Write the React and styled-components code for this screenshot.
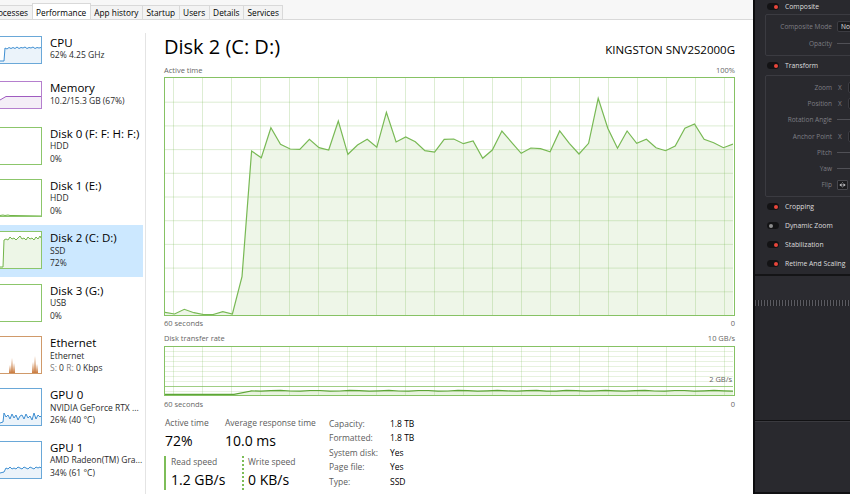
import React from "react";
import styled, { createGlobalStyle } from "styled-components";

const GlobalStyle = createGlobalStyle`
  html, body {
    margin: 0;
    padding: 0;
    background: #ffffff;
  }
  body {
    font-family: "Open Sans", "Noto Sans", sans-serif;
  }
  * {
    box-sizing: border-box;
  }
`;

const PALETTE = {
  cpu: { border: "#6aa8d8", line: "#3f8fd2", fill: "#ebf3fa" },
  mem: { border: "#b57fce", line: "#a05cc0", fill: "#f4eef7" },
  disk: { border: "#8cc66b", line: "#72b44a", fill: "#edf6e7" },
  net: { border: "#d09a6a", line: "#c0631c", fill: "#fbeee2" },
};

// active time samples, px from the top of the chart frame
const ACTIVE = [
  312.3, 314, 309.3, 312.7, 316, 315.3, 311.7, 314, 276.7, 151, 157.7, 127.7,
  144.3, 149, 149.3, 139.3, 147.7, 150, 121, 154.3, 145, 139.3, 147.3, 112.3,
  142, 137, 141.7, 150.7, 152, 139.3, 139, 143.7, 141, 158.3, 150, 131, 142.3,
  153.3, 148, 148.7, 151.7, 131, 143.3, 154, 143.3, 98.3, 128.3, 148.3, 131,
  143.3, 139.3, 147.7, 150.7, 146, 128.3, 124, 139.3, 142.7, 147.7, 144,
];

const Screen = styled.div`
  display: flex;
  width: 850px;
  height: 494px;
  overflow: hidden;
`;

const Window = styled.div`
  width: 753px;
  flex-shrink: 0;
  display: flex;
  flex-direction: column;
  background: #fff;
  color: #000;
`;

const TabBar = styled.div`
  height: 20px;
  flex-shrink: 0;
  display: flex;
  align-items: flex-end;
  background: #f7f7f7;
  border-bottom: 1px solid #d9d9d9;
  overflow: hidden;
`;

const Tab = styled.div`
  height: ${(p) => (p.$active ? 17 : 14)}px;
  margin-bottom: ${(p) => (p.$active ? -1 : 0)}px;
  margin-left: -1px;
  padding: 0 3.5px;
  display: flex;
  align-items: center;
  border: 1px solid #d9d9d9;
  border-bottom: none;
  background: ${(p) => (p.$active ? "#fff" : "#f3f3f3")};
  font-size: 8.3px;
  white-space: nowrap;
  &:first-child {
    margin-left: -15px;
  }
`;

const Body = styled.div`
  flex: 1;
  display: flex;
  min-height: 0;
`;

const Sidebar = styled.div`
  width: 143px;
  flex-shrink: 0;
  padding-top: 9px;
  display: flex;
  flex-direction: column;
`;

const SideDivider = styled.div`
  width: 1px;
  flex-shrink: 0;
  margin: 13px 0 0 2px;
  background: #e4e4e4;
`;

const SideItem = styled.div`
  height: ${(p) => p.$h}px;
  flex-shrink: 0;
  display: flex;
  align-items: flex-start;
  padding-top: 6.5px;
  background: ${(p) => (p.$selected ? "#cce8ff" : "transparent")};
`;

const Thumb = styled.div`
  width: 42px;
  height: ${(p) => p.$h}px;
  flex-shrink: 0;
  border: 1px solid ${(p) => p.$color};
  border-left: none;
  background: #fff;
  svg {
    display: block;
  }
`;

const ItemText = styled.div`
  margin-left: 8px;
  display: flex;
  flex-direction: column;
  white-space: nowrap;
`;

const ItemTitle = styled.div`
  font-size: 11.5px;
  line-height: 13px;
  margin-bottom: 0.5px;
`;

const ItemSub = styled.div`
  font-size: 8.5px;
  line-height: 12.5px;
  color: #2a2a2a;
`;

const Dim = styled.span`
  color: #808080;
`;

const Main = styled.div`
  flex: 1;
  min-width: 0;
  padding: 13px 18px 0;
  display: flex;
  flex-direction: column;
`;

const Header = styled.div`
  height: 28px;
  display: flex;
  justify-content: space-between;
  align-items: baseline;
`;

const Title = styled.div`
  font-size: 20px;
  line-height: 28px;
`;

const Model = styled.div`
  font-size: 11.5px;
  line-height: 28px;
`;

const AxisRow = styled.div`
  display: flex;
  justify-content: space-between;
  margin-top: ${(p) => p.$mt}px;
  font-size: 7.5px;
  line-height: 10px;
  color: #666;
`;

const ChartFrame = styled.div`
  position: relative;
  height: ${(p) => p.$h}px;
  margin-top: ${(p) => p.$mt}px;
  border: 1px solid #86c264;
  background: #fff;
  svg {
    display: block;
  }
`;

const ScaleTag = styled.span`
  position: absolute;
  right: 2px;
  top: 27px;
  font-size: 7.5px;
  line-height: 10px;
  color: #666;
`;

const Stats = styled.div`
  display: flex;
  margin-top: 8px;
`;

const StatsLeft = styled.div`
  width: 165px;
  flex-shrink: 0;
  display: flex;
  flex-direction: column;
`;

const StatRow = styled.div`
  display: flex;
  margin-top: ${(p) => p.$mt || 0}px;
`;

const StatCell = styled.div`
  width: ${(p) => (p.$w ? `${p.$w}px` : "auto")};
  display: flex;
  flex-direction: column;
  padding-left: 1px;
`;

const SpeedCell = styled(StatCell)`
  border-left: 2px ${(p) => (p.$dotted ? "dotted" : "solid")} #7dbd58;
  padding-left: ${(p) => p.$pad}px;
`;

const StatLabel = styled.div`
  font-size: 8.5px;
  line-height: 12px;
  color: #5c5c5c;
  white-space: nowrap;
`;

const StatValue = styled.div`
  font-size: 14px;
  line-height: 20px;
  margin-top: 2px;
  white-space: nowrap;
`;

const PropGrid = styled.div`
  display: grid;
  grid-template-columns: 61px auto;
  grid-auto-rows: 14.5px;
  align-items: center;
  margin-top: -1px;
  font-size: 8.5px;
`;

const PropKey = styled.div`
  color: #5c5c5c;
`;

const PropVal = styled.div`
  color: #000;
`;

const Inspector = styled.div`
  flex: 1;
  min-width: 0;
  display: flex;
  flex-direction: column;
  background: #29292e;
  border-left: 2px solid #0c0c0e;
  overflow: hidden;
`;

const SectionHead = styled.div`
  height: ${(p) => p.$h}px;
  margin-top: ${(p) => p.$mt || 0}px;
  flex-shrink: 0;
  display: flex;
  align-items: center;
  padding-left: 12px;
`;

const Toggle = styled.div`
  width: 12px;
  height: 7px;
  border-radius: 4px;
  background: #131315;
  display: flex;
  align-items: center;
  justify-content: ${(p) => (p.$on ? "flex-end" : "flex-start")};
  padding: 0 1.5px;
`;

const ToggleDot = styled.div`
  width: 4px;
  height: 4px;
  border-radius: 50%;
  background: ${(p) => (p.$on ? "#e8463b" : "#8d8d8d")};
`;

const SectionName = styled.div`
  margin-left: 6px;
  font-size: 6.8px;
  font-weight: 500;
  color: #dedede;
  white-space: nowrap;
`;

const PropBox = styled.div`
  width: 170px;
  flex-shrink: 0;
  margin: ${(p) => p.$mt}px 0 0 10px;
  padding: 3.5px 0 3px;
  border: 1px solid #3b3b41;
  border-radius: 2px;
`;

const PropRow = styled.div`
  height: ${(p) => p.$h}px;
  display: grid;
  grid-template-columns: 66px 1fr;
  column-gap: 5px;
  align-items: center;
`;

const PropName = styled.div`
  text-align: right;
  font-size: 6.5px;
  color: #7e7e84;
  white-space: nowrap;
`;

const Field = styled.div`
  width: 60px;
  height: 11px;
  padding-left: 3px;
  background: #1c1c1f;
  border: 1px solid #3c3c42;
  border-radius: 2px;
  color: #e0e0e0;
  font-size: 6.5px;
  line-height: 9px;
`;

const Slider = styled.div`
  height: 1px;
  background: #505056;
`;

const Axis = styled.div`
  display: flex;
  align-items: center;
`;

const AxisName = styled.span`
  width: 11px;
  padding-left: 1px;
  font-size: 6.5px;
  color: #7e7e84;
`;

const FlipGroup = styled.div`
  display: flex;
  gap: 3px;
`;

const FlipBtn = styled.div`
  width: 11px;
  height: 10px;
  background: #1c1c1f;
  border: 1px solid #48484e;
  border-radius: 1px;
  display: flex;
  align-items: center;
  justify-content: center;
`;

const PanelRule = styled.div`
  height: 2px;
  flex-shrink: 0;
  margin-top: 0.5px;
  background: #141416;
`;

const Toolbar = styled.div`
  height: 24px;
  flex-shrink: 0;
  background: #2b2b30;
`;

const Ruler = styled.div`
  height: 6px;
  flex-shrink: 0;
  background: repeating-linear-gradient(90deg, #5a5a60 0 1px, #232327 1px 3px);
`;

const Tracks = styled.div`
  height: 114px;
  flex-shrink: 0;
  background: #27272c;
`;

const Split = styled.div`
  height: 2px;
  flex-shrink: 0;
  border-top: 1px solid #111113;
  border-bottom: 1px solid #3a3a3f;
`;

const Lower = styled.div`
  flex: 1;
  background: #29292e;
  border-bottom: 2px solid #111113;
`;

const Spark = ({ w, h, pts, pal, spikes }) => (
  <svg width={w} height={h}>
    {pts && <polygon points={`${pts} ${w},${h} 0,${h}`} fill={pal.fill} />}
    {pts && <polyline points={pts} fill="none" stroke={pal.line} strokeWidth="1" />}
    {spikes && <polygon points={spikes} fill={pal.line} opacity="0.85" />}
  </svg>
);

const SIDE = [
  { name: "CPU", lines: ["62% 4.25 GHz"], pal: PALETTE.cpu, h: 45.5, th: 28,
    pts: "0,24 4,24 5,11 7,12 9,10.5 11,11.5 13,10.5 15,11.5 17,10 19,11.5 21,10.5 23,11 25,10 27,11.5 29,10.5 31,11 33,10 35,11.5 37,10.5 39,11 41,10.5" },
  { name: "Memory", lines: ["10.2/15.3 GB (67%)"], pal: PALETTE.mem, h: 45.5, th: 28,
    pts: "0,18 6,14.5 41,14.5" },
  { name: "Disk 0 (F: F: H: F:)", lines: ["HDD", "0%"], pal: PALETTE.disk, h: 52.4, th: 38 },
  { name: "Disk 1 (E:)", lines: ["HDD", "0%"], pal: PALETTE.disk, h: 52.4, th: 38,
    pts: "0,35.5 3,35 5,35.5 8,35 10,35.5 13,35.5 41,36" },
  { name: "Disk 2 (C: D:)", lines: ["SSD", "72%"], pal: PALETTE.disk, h: 52.4, th: 38, selected: true,
    pts: "0,35 3,35 4,8 6,7 8,8 10,5 12,7 14,6 16,8 18,6 20,4 22,7 24,6 26,8 28,5 30,7 32,6 34,8 36,5 38,7 40,4 41,6" },
  { name: "Disk 3 (G:)", lines: ["USB", "0%"], pal: PALETTE.disk, h: 52.4, th: 38 },
  { name: "Ethernet", lines: ["Ethernet", "net"], pal: PALETTE.net, h: 52.4, th: 38,
    spikes: "0,36 9,36 10,28 11,36 12,21 13,36 14,26 15,36 32,36 33,25 34,36 35,19 36,36 37,27 38,36 41,36" },
  { name: "GPU 0", lines: ["NVIDIA GeForce RTX ...", "26% (40 °C)"], pal: PALETTE.cpu, h: 52.4, th: 38,
    pts: "0,34 3,33 4,24 6,28 8,26 10,30 12,25 14,29 16,26 18,31 20,27 22,26 24,30 26,25 28,29 30,27 32,31 34,24 36,30 38,26 40,28 41,27" },
  { name: "GPU 1", lines: ["AMD Radeon(TM) Gra...", "34% (61 °C)"], pal: PALETTE.cpu, h: 52.4, th: 38,
    pts: "0,31 4,30 6,26 8,27 10,25 12,27 14,26 16,27 18,25 20,26 22,27 24,25 26,26 28,27 30,25 32,26 34,27 36,25 38,26 40,25 41,26" },
];

const TABS = ["Processes", "Performance", "App history", "Startup", "Users", "Details", "Services"];

const CW = 568;

const GridV = ({ h, color }) =>
  Array.from({ length: 20 }, (_, k) => (
    <line key={`v${k}`} x1={8.5 + 29 * k} x2={8.5 + 29 * k} y1={0} y2={h} stroke={color} strokeWidth="1" />
  ));

const ActiveChart = () => {
  const h = 237;
  const pts = ACTIVE.map((v, i) => `${((i * CW) / 59).toFixed(1)},${Math.min(v - 78, h - 0.5).toFixed(1)}`).join(" ");
  return (
    <svg width={CW} height={h}>
      <polygon points={`${pts} ${CW},${h} 0,${h}`} fill="#eef6e8" />
      <GridV h={h} color="rgba(120,185,80,0.25)" />
      {Array.from({ length: 9 }, (_, k) => (
        <line key={`h${k}`} x1={0} x2={CW} y1={23.7 * (k + 1) + 0.5} y2={23.7 * (k + 1) + 0.5} stroke="rgba(120,185,80,0.25)" />
      ))}
      <polyline points={pts} fill="none" stroke="#78b954" strokeWidth="1.2" />
    </svg>
  );
};

const TransferChart = () => {
  const h = 48;
  const tail = Array.from({ length: 50 }, (_, i) => {
    const x = 86 + i * 9.85;
    const y = 43.8 + Math.sin(i * 1.7) * 0.45;
    return `${Math.min(x, CW).toFixed(1)},${y.toFixed(1)}`;
  }).join(" ");
  const pts = `0,47.3 69,47.3 86,44 ${tail}`;
  return (
    <svg width={CW} height={h}>
      <polygon points={`${pts} ${CW},${h} 0,${h}`} fill="#e8f3df" />
      <GridV h={h} color="rgba(120,185,80,0.22)" />
      {Array.from({ length: 9 }, (_, k) => (
        <line
          key={`h${k}`}
          x1={0}
          x2={CW}
          y1={4.5 + 5 * k}
          y2={4.5 + 5 * k}
          stroke={k === 7 ? "rgba(120,185,80,0.7)" : "rgba(120,185,80,0.18)"}
        />
      ))}
      <polyline points={pts} fill="none" stroke="#5da537" strokeWidth="1.2" />
    </svg>
  );
};

const FlipIcon = ({ mirror }) => (
  <svg width="7" height="6" viewBox="0 0 7 6" style={mirror ? { transform: "rotate(90deg)" } : undefined}>
    <line x1="3.5" y1="0" x2="3.5" y2="6" stroke="#9a9aa0" strokeWidth="0.6" strokeDasharray="1 0.8" />
    <polygon points="0.3,3 2.6,1.2 2.6,4.8" fill="#c8c8cc" />
    <polygon points="6.7,3 4.4,1.2 4.4,4.8" fill="#c8c8cc" />
  </svg>
);

const Section = ({ name, on = true, h = 19, mt }) => (
  <SectionHead $h={h} $mt={mt}>
    <Toggle $on={on}>
      <ToggleDot $on={on} />
    </Toggle>
    <SectionName>{name}</SectionName>
  </SectionHead>
);

const AxisField = () => (
  <Axis>
    <AxisName>X</AxisName>
    <Field />
  </Axis>
);

const App = () => (
  <>
    <GlobalStyle />
    <Screen>
      <Window>
        <TabBar>
          {TABS.map((t) => (
            <Tab key={t} $active={t === "Performance"}>
              {t}
            </Tab>
          ))}
        </TabBar>
        <Body>
          <Sidebar>
            {SIDE.map((s) => (
              <SideItem key={s.name} $h={s.h} $selected={s.selected}>
                <Thumb $h={s.th} $color={s.pal.border}>
                  <Spark w={41} h={s.th - 2} pts={s.pts} pal={s.pal} spikes={s.spikes} />
                </Thumb>
                <ItemText>
                  <ItemTitle>{s.name}</ItemTitle>
                  {s.lines.map((l) =>
                    l === "net" ? (
                      <ItemSub key={l}>
                        <Dim>S:</Dim> 0 <Dim>R:</Dim> 0 Kbps
                      </ItemSub>
                    ) : (
                      <ItemSub key={l}>{l}</ItemSub>
                    )
                  )}
                </ItemText>
              </SideItem>
            ))}
          </Sidebar>
          <SideDivider />
          <Main>
            <Header>
              <Title>Disk 2 (C: D:)</Title>
              <Model>KINGSTON SNV2S2000G</Model>
            </Header>
            <AxisRow $mt={4}>
              <span>Active time</span>
              <span>100%</span>
            </AxisRow>
            <ChartFrame $h={239} $mt={2}>
              <ActiveChart />
            </ChartFrame>
            <AxisRow $mt={2}>
              <span>60 seconds</span>
              <span>0</span>
            </AxisRow>
            <AxisRow $mt={5}>
              <span>Disk transfer rate</span>
              <span>10 GB/s</span>
            </AxisRow>
            <ChartFrame $h={50} $mt={3}>
              <TransferChart />
              <ScaleTag>2 GB/s</ScaleTag>
            </ChartFrame>
            <AxisRow $mt={3}>
              <span>60 seconds</span>
              <span>0</span>
            </AxisRow>
            <Stats>
              <StatsLeft>
                <StatRow>
                  <StatCell $w={60}>
                    <StatLabel>Active time</StatLabel>
                    <StatValue>72%</StatValue>
                  </StatCell>
                  <StatCell>
                    <StatLabel>Average response time</StatLabel>
                    <StatValue>10.0 ms</StatValue>
                  </StatCell>
                </StatRow>
                <StatRow $mt={5}>
                  <SpeedCell $w={78} $pad={5}>
                    <StatLabel>Read speed</StatLabel>
                    <StatValue>1.2 GB/s</StatValue>
                  </SpeedCell>
                  <SpeedCell $dotted $pad={4}>
                    <StatLabel>Write speed</StatLabel>
                    <StatValue>0 KB/s</StatValue>
                  </SpeedCell>
                </StatRow>
              </StatsLeft>
              <PropGrid>
                <PropKey>Capacity:</PropKey>
                <PropVal>1.8 TB</PropVal>
                <PropKey>Formatted:</PropKey>
                <PropVal>1.8 TB</PropVal>
                <PropKey>System disk:</PropKey>
                <PropVal>Yes</PropVal>
                <PropKey>Page file:</PropKey>
                <PropVal>Yes</PropVal>
                <PropKey>Type:</PropKey>
                <PropVal>SSD</PropVal>
              </PropGrid>
            </Stats>
          </Main>
        </Body>
      </Window>
      <Inspector>
        <Section name="Composite" h={13} />
        <PropBox $mt={1}>
          <PropRow $h={16.5}>
            <PropName>Composite Mode</PropName>
            <Field>Normal</Field>
          </PropRow>
          <PropRow $h={16.5}>
            <PropName>Opacity</PropName>
            <Slider />
          </PropRow>
        </PropBox>
        <Section name="Transform" h={13} mt={3.5} />
        <PropBox $mt={2.5}>
          <PropRow $h={16.3}>
            <PropName>Zoom</PropName>
            <AxisField />
          </PropRow>
          <PropRow $h={16.3}>
            <PropName>Position</PropName>
            <AxisField />
          </PropRow>
          <PropRow $h={16.3}>
            <PropName>Rotation Angle</PropName>
            <Slider />
          </PropRow>
          <PropRow $h={16.3}>
            <PropName>Anchor Point</PropName>
            <AxisField />
          </PropRow>
          <PropRow $h={16.3}>
            <PropName>Pitch</PropName>
            <Slider />
          </PropRow>
          <PropRow $h={16.3}>
            <PropName>Yaw</PropName>
            <Slider />
          </PropRow>
          <PropRow $h={16.3}>
            <PropName>Flip</PropName>
            <FlipGroup>
              <FlipBtn>
                <FlipIcon />
              </FlipBtn>
              <FlipBtn>
                <FlipIcon mirror />
              </FlipBtn>
            </FlipGroup>
          </PropRow>
        </PropBox>
        <Section name="Cropping" />
        <Section name="Dynamic Zoom" on={false} />
        <Section name="Stabilization" />
        <Section name="Retime And Scaling" />
        <PanelRule />
        <Toolbar />
        <Ruler />
        <Tracks />
        <Split />
        <Lower />
      </Inspector>
    </Screen>
  </>
);

export default App;
